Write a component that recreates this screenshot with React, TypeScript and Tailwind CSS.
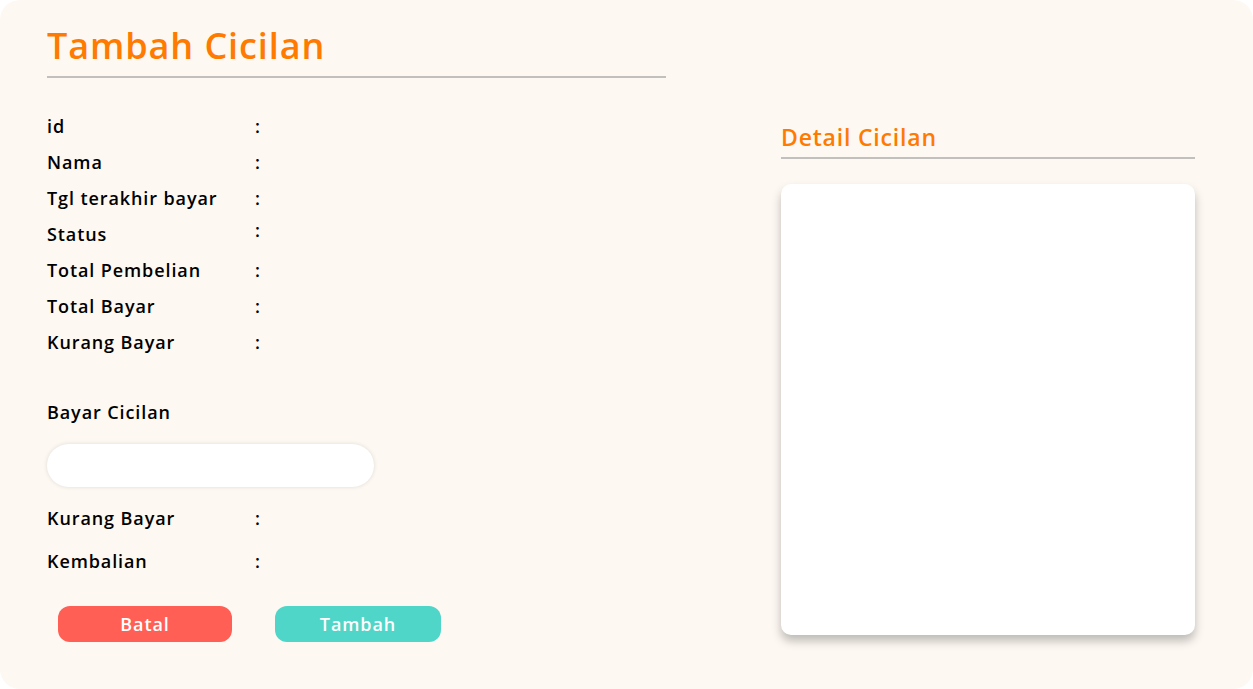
import React from 'react';

const rows = [
  'id',
  'Nama',
  'Tgl terakhir bayar',
  'Status',
  'Total Pembelian',
  'Total Bayar',
  'Kurang Bayar',
];

const InfoRow: React.FC<{ label: string; raised?: boolean }> = ({ label, raised }) => (
  <div className="flex items-center h-[36px]">
    <span className="w-[208px]">{label}</span>
    <span className={raised ? '-translate-y-[4px]' : ''}>:</span>
  </div>
);

export default function App() {
  return (
    <div className="w-[1253px] h-[689px] bg-white" style={{ fontFamily: '"Open Sans", Lato, sans-serif' }}>
      <div className="w-full h-full rounded-[20px] bg-[#fdf8f2] flex text-black">
        <div className="w-[713px] pl-[47px] pt-[24px]">
          <h1 className="text-[36px] font-semibold text-[#ff7a00] leading-[44px] tracking-[0.025em]">Tambah Cicilan</h1>
          <div className="w-[619px] h-[2px] bg-[#c2c0bd] mt-[8px]" />

          <div className="mt-[30px] text-[18px] font-semibold tracking-[0.05em]">
            {rows.map((r) => (
              <InfoRow key={r} label={r} raised={r === 'Status'} />
            ))}
          </div>

          <div className="mt-[39px] text-[18px] font-semibold tracking-[0.05em]">Bayar Cicilan</div>
          <input
            className="mt-[18px] w-[327px] h-[43px] rounded-full bg-white shadow-[0_0_4px_rgba(0,0,0,0.12)] outline-none px-4"
          />

          <div className="mt-[13px] text-[18px] font-semibold tracking-[0.05em]">
            <InfoRow label="Kurang Bayar" />
            <div className="mt-[7px]">
              <InfoRow label="Kembalian" />
            </div>
          </div>

          <div className="mt-[27px] flex gap-[43px] pl-[11px]">
            <button className="w-[174px] h-[36px] rounded-[12px] bg-[#ff5f55] text-white text-[18px] font-semibold tracking-[0.05em]">
              Batal
            </button>
            <button className="w-[166px] h-[36px] rounded-[12px] bg-[#4fd6c8] text-white text-[18px] font-semibold tracking-[0.05em]">
              Tambah
            </button>
          </div>
        </div>

        <div className="pl-[68px] pt-[122px]">
          <h2 className="text-[23px] font-semibold text-[#ff7a00] leading-[30px] tracking-[0.035em]">Detail Cicilan</h2>
          <div className="w-[414px] h-[2px] bg-[#c2c0bd] mt-[5px]" />
          <div className="mt-[25px] w-[414px] h-[451px] bg-white rounded-[10px] shadow-[0_6px_10px_rgba(0,0,0,0.25)]" />
        </div>
      </div>
    </div>
  );
}
